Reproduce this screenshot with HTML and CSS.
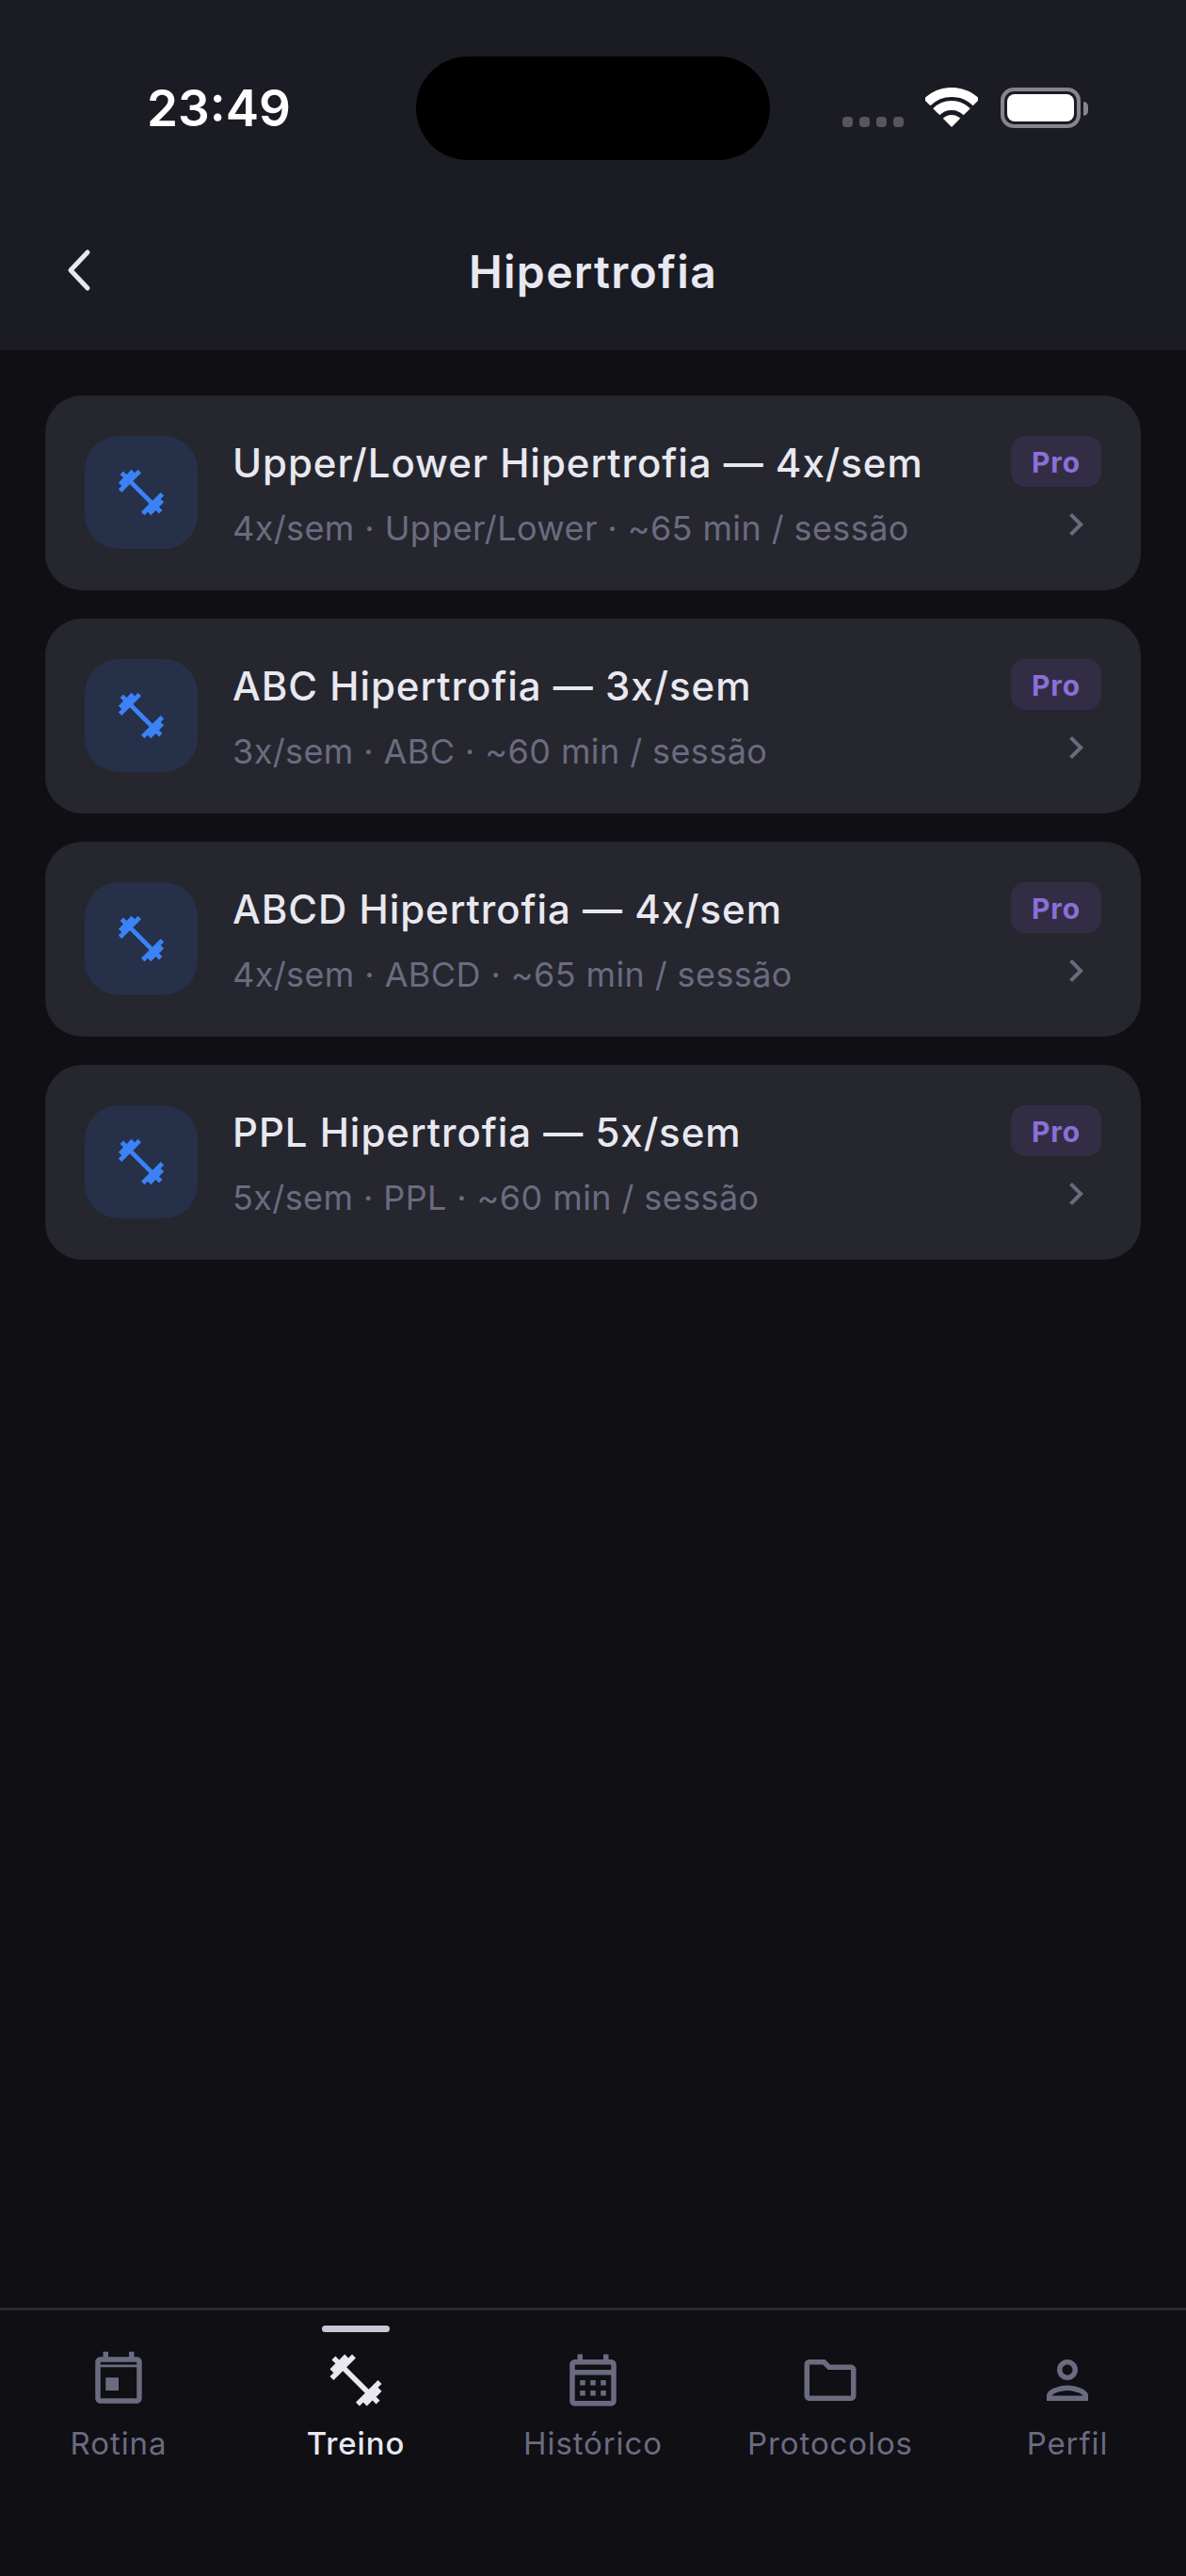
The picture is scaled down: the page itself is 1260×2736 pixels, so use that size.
FILE: index.html
```html
<!DOCTYPE html>
<html lang="pt-BR"><head>
  <meta charset="utf-8">
  <title>Hipertrofia</title>
  <link rel="stylesheet" href="styles.css">
</head>
<body>

<svg class="defs" width="0" height="0">
  <symbol id="dumbbell" viewBox="0 0 24 24"><path d="M20.57 14.86L22 13.43 20.57 12 17 15.57 8.43 7 12 3.43 10.57 2 9.14 3.43 7.71 2 5.57 4.14 4.14 2.71 2.71 4.14l1.43 1.43L2 7.71l1.43 1.43L2 10.57 3.43 12 7 8.43 15.57 17 12 20.57 13.43 22l1.43-1.43L16.29 22l2.14-2.14 1.43 1.43 1.43-1.43-1.43-1.43L22 16.29z"/></symbol>
  <symbol id="chevron" viewBox="0 0 24 24"><path d="M10 6L8.59 7.41 13.17 12l-4.58 4.59L10 18l6-6z"/></symbol>
</svg>

<div class="page">
  <header class="top">
    <div class="status">
      <div class="time">23:49</div>
      <div class="island"></div>
      <div class="status-icons">
        <div class="dots"><i></i><i></i><i></i><i></i></div>
        <svg class="wifi" viewBox="0 0 56 42"><path class="arc" d="M1.8 15.8A37 37 0 0 1 54.2 15.8"/><path class="arc" d="M11.74 25.74A23 23 0 0 1 44.26 25.74"/><path d="M28 42L18.8 32.8A13 13 0 0 1 37.2 32.8Z"/></svg>
        <div class="battery"><div class="battery-fill"></div></div>
        <div class="battery-nub"></div>
      </div>
    </div>
    <div class="nav">
      <svg class="back" viewBox="0 0 30 46"><path d="M25 4L7 23L25 42"/></svg>
      <h1>Hipertrofia</h1>
    </div>
  </header>

  <main class="list">
    <a class="card">
      <div class="thumb"><svg class="thumb-icon"><use href="#dumbbell"/></svg></div>
      <div class="info">
        <div class="name">Upper/Lower Hipertrofia — 4x/sem</div>
        <div class="meta">4x/sem · Upper/Lower · ~65 min / sessão</div>
      </div>
      <div class="side">
        <span class="badge">Pro</span>
        <svg class="chev"><use href="#chevron"/></svg>
      </div>
    </a>
    <a class="card">
      <div class="thumb"><svg class="thumb-icon"><use href="#dumbbell"/></svg></div>
      <div class="info">
        <div class="name">ABC Hipertrofia — 3x/sem</div>
        <div class="meta">3x/sem · ABC · ~60 min / sessão</div>
      </div>
      <div class="side">
        <span class="badge">Pro</span>
        <svg class="chev"><use href="#chevron"/></svg>
      </div>
    </a>
    <a class="card">
      <div class="thumb"><svg class="thumb-icon"><use href="#dumbbell"/></svg></div>
      <div class="info">
        <div class="name">ABCD Hipertrofia — 4x/sem</div>
        <div class="meta">4x/sem · ABCD · ~65 min / sessão</div>
      </div>
      <div class="side">
        <span class="badge">Pro</span>
        <svg class="chev"><use href="#chevron"/></svg>
      </div>
    </a>
    <a class="card">
      <div class="thumb"><svg class="thumb-icon"><use href="#dumbbell"/></svg></div>
      <div class="info">
        <div class="name">PPL Hipertrofia — 5x/sem</div>
        <div class="meta">5x/sem · PPL · ~60 min / sessão</div>
      </div>
      <div class="side">
        <span class="badge">Pro</span>
        <svg class="chev"><use href="#chevron"/></svg>
      </div>
    </a>
  </main>

  <nav class="tabs">
    <a class="tab">
      <i class="tab-mark"></i>
      <svg class="tab-icon" viewBox="0 0 24 24"><path d="M19 3h-1V1h-2v2H8V1H6v2H5c-1.1 0-2 .9-2 2v14c0 1.1.9 2 2 2h14c1.1 0 2-.9 2-2V5c0-1.1-.9-2-2-2zm0 16H5V7h14v12zm0-14H5v1h14V5zM7 11h5v5H7z" fill-rule="evenodd"/></svg>
      <span>Rotina</span>
    </a>
    <a class="tab active">
      <i class="tab-mark"></i>
      <svg class="tab-icon"><use href="#dumbbell"/></svg>
      <span>Treino</span>
    </a>
    <a class="tab">
      <i class="tab-mark"></i>
      <svg class="tab-icon" viewBox="0 0 24 24"><path d="M19 4h-1V2h-2v2H8V2H6v2H5c-1.1 0-2 .9-2 2v14c0 1.1.9 2 2 2h14c1.1 0 2-.9 2-2V6c0-1.1-.9-2-2-2zm0 16H5V10h14v10zm0-12H5V6h14v2zM9 14H7v-2h2v2zm4 0h-2v-2h2v2zm4 0h-2v-2h2v2zm-8 4H7v-2h2v2zm4 0h-2v-2h2v2zm4 0h-2v-2h2v2z"/></svg>
      <span>Histórico</span>
    </a>
    <a class="tab">
      <i class="tab-mark"></i>
      <svg class="tab-icon" viewBox="0 0 24 24"><path d="M9.17 6l2 2H20v10H4V6h5.17M10 4H4c-1.1 0-1.99.9-1.99 2L2 18c0 1.1.9 2 2 2h16c1.1 0 2-.9 2-2V8c0-1.1-.9-2-2-2h-8l-2-2z"/></svg>
      <span>Protocolos</span>
    </a>
    <a class="tab">
      <i class="tab-mark"></i>
      <svg class="tab-icon" viewBox="0 0 24 24"><path d="M12 6c1.1 0 2 .9 2 2s-.9 2-2 2-2-.9-2-2 .9-2 2-2m0 10c2.7 0 5.8 1.29 6 2H6c.23-.72 3.31-2 6-2m0-12C9.79 4 8 5.79 8 8s1.79 4 4 4 4-1.79 4-4-1.79-4-4-4zm0 10c-2.67 0-8 1.34-8 4v2h16v-2c0-2.66-5.33-4-8-4z"/></svg>
      <span>Perfil</span>
    </a>
  </nav>
</div>

</body></html>
```

FILE: styles.css
```css
html, body { margin: 0; padding: 0; background: #0f0f14; font-family: Inter, "Liberation Sans", sans-serif; }

.defs { position: absolute; }

.page {
  display: flex;
  flex-direction: column;
  height: 2736px;
}

/* header */
.top {
  background: #1a1b23;
  height: 372px;
  flex: none;
}
.status {
  display: grid;
  grid-template-columns: 442px 376px 1fr;
  padding-top: 60px;
  height: 110px;
}
.time {
  color: #fff;
  font-size: 53px;
  font-weight: 600;
  line-height: 110px;
  padding-left: 156px;
}
.island {
  background: #000;
  border-radius: 55px;
}
.status-icons {
  display: flex;
  align-items: flex-start;
  padding: 33px 0 0 77px;
}
.dots {
  display: flex;
  gap: 7px;
  margin-top: 31px;
}
.dots i {
  width: 11px;
  height: 11px;
  border-radius: 4px;
  background: #56565c;
}
.wifi {
  width: 56px;
  height: 42px;
  margin-left: 23px;
  fill: #fff;
}
.wifi .arc {
  fill: none;
  stroke: #fff;
  stroke-width: 10;
}
.battery {
  margin-left: 24px;
  padding: 3px;
  border: 4px solid #85858b;
  border-radius: 14px;
  width: 71px;
  height: 29px;
}
.battery-fill {
  height: 100%;
  background: #fff;
  border-radius: 8px;
}
.battery-nub {
  width: 5px;
  height: 15px;
  margin: 15px 0 0 3px;
  background: #85858b;
  border-radius: 0 5px 5px 0;
}

.nav {
  display: flex;
  align-items: center;
  justify-content: center;
  position: relative;
  height: 202px;
  box-sizing: border-box;
  padding-top: 34px;
}
.nav h1 {
  margin: 0;
  color: #e8e8f0;
  font-size: 48px;
  font-weight: 600;
  letter-spacing: 1.3px;
}
.back {
  position: absolute;
  left: 68px;
  top: 94px;
  width: 30px;
  height: 46px;
  fill: none;
  stroke: #e8e8f0;
  stroke-width: 5;
  stroke-linecap: round;
  stroke-linejoin: round;
}

/* cards */
.list {
  flex: 1;
  display: flex;
  flex-direction: column;
  gap: 30px;
  padding: 48px 48px 0;
}
.card {
  display: flex;
  align-items: flex-start;
  height: 207px;
  padding: 43px 42px 0;
  box-sizing: border-box;
  background: #25262e;
  border-radius: 39px;
}
.thumb {
  display: flex;
  align-items: center;
  justify-content: center;
  flex: none;
  width: 120px;
  height: 120px;
  background: #263048;
  border-radius: 36px;
}
.thumb-icon {
  width: 58px;
  height: 58px;
  fill: #3b82f6;
}
.info {
  flex: 1;
  margin-left: 37px;
}
.name {
  color: #e8e8f0;
  font-size: 42px;
  font-weight: 500;
  line-height: 58px;
  letter-spacing: 0.95px;
}
.meta {
  margin-top: 17px;
  color: #6b6b80;
  font-size: 36px;
  line-height: 46px;
  letter-spacing: 0.4px;
}
.side {
  display: flex;
  flex-direction: column;
  align-items: center;
  flex: none;
  width: 96px;
}
.badge {
  width: 96px;
  height: 54px;
  color: #8b6fd8;
  background: #322d45;
  border-radius: 15px;
  font-size: 30px;
  font-weight: 700;
  line-height: 57px;
  letter-spacing: 0.9px;
  text-align: center;
}
.chev {
  align-self: flex-end;
  width: 48px;
  height: 48px;
  margin: 16px 3px 0 0;
  fill: #6b6b80;
}

/* bottom tabs */
.tabs {
  display: flex;
  height: 285px;
  flex: none;
  box-sizing: border-box;
  border-top: 3px solid #2a2a33;
}
.tab {
  flex: 1;
  display: flex;
  flex-direction: column;
  align-items: center;
  color: #6b6b80;
  fill: #6b6b80;
  font-size: 33px;
  letter-spacing: 0.9px;
}
.tab-mark {
  width: 72px;
  height: 7px;
  margin-top: 16px;
  border-radius: 4px;
}
.tab-icon {
  width: 66px;
  height: 66px;
  margin-top: 18px;
}
.tab span {
  margin-top: 13px;
  line-height: 42px;
}
.active {
  color: #e8e8f0;
  fill: #e8e8f0;
  font-weight: 500;
}
.active .tab-mark {
  background: #c8c8d8;
}
```
